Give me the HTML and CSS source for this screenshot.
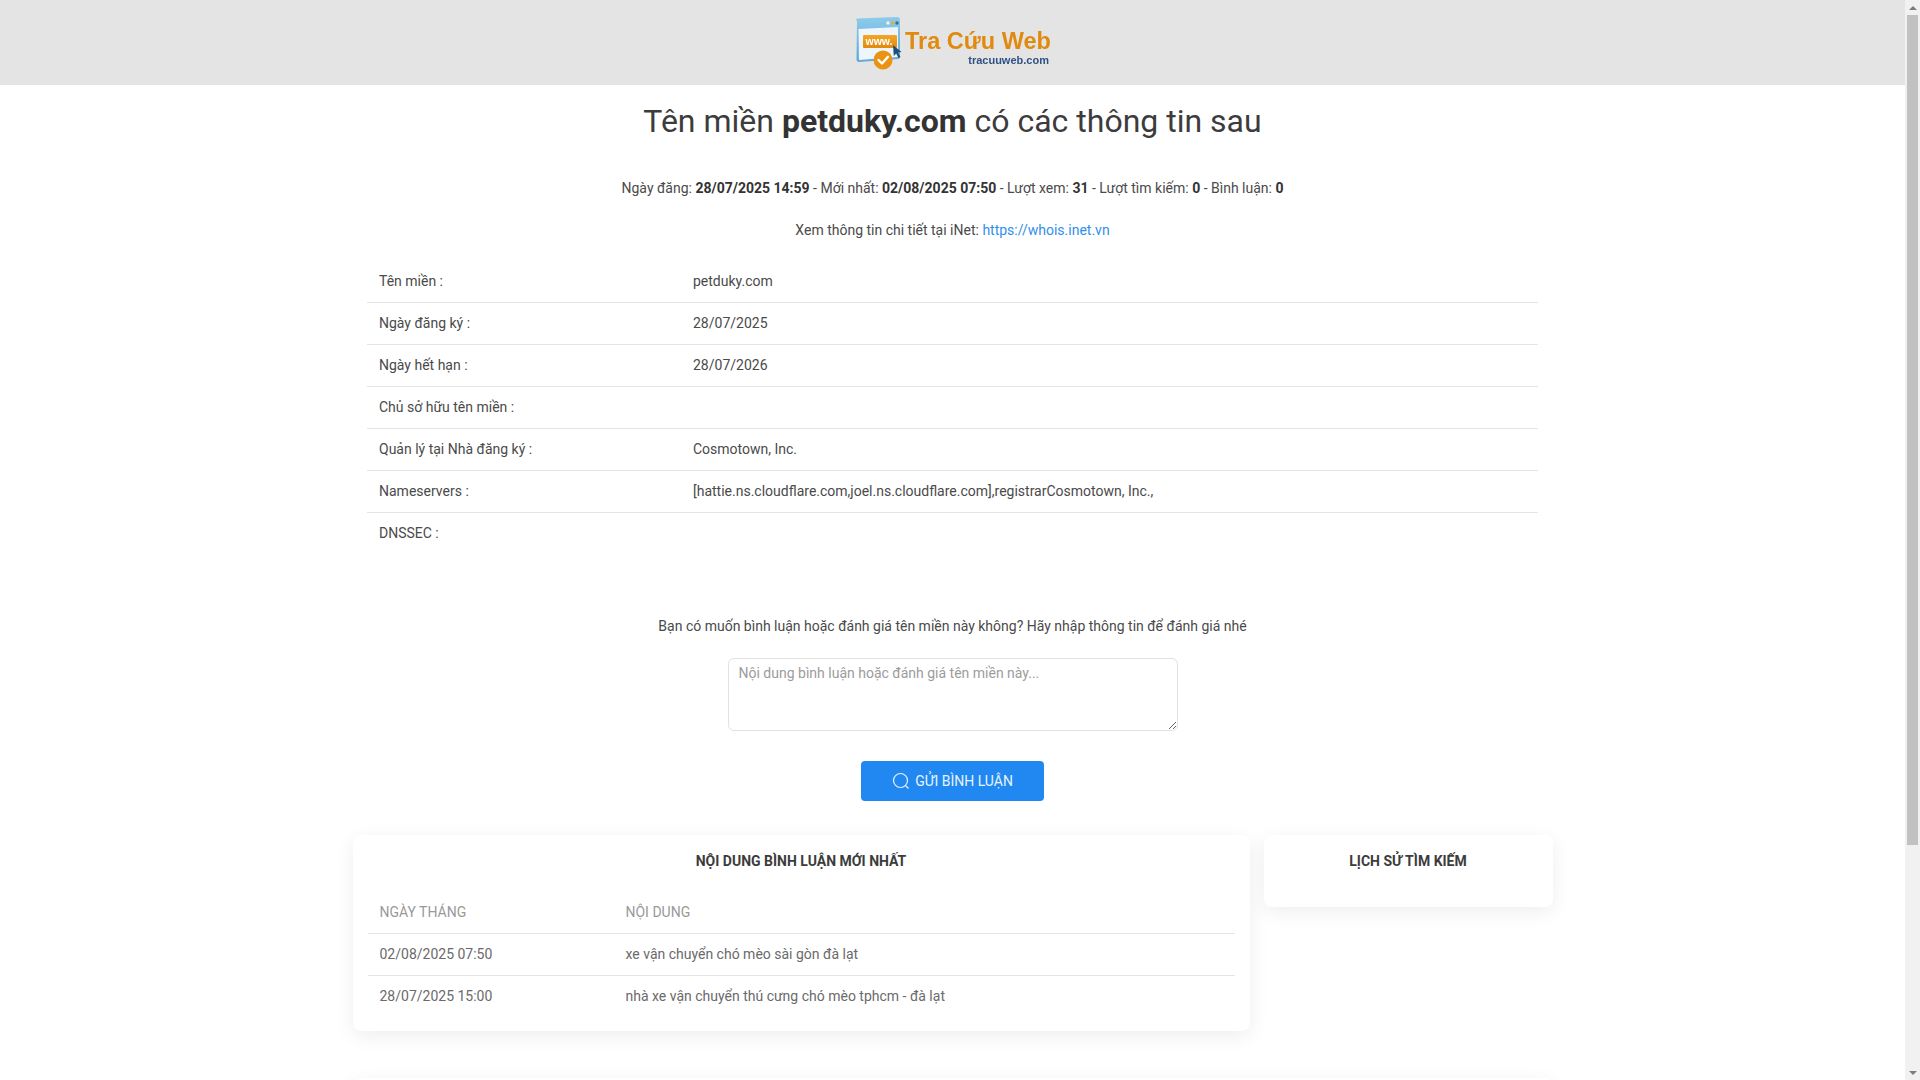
FILE: index.html
```html
<!DOCTYPE html>
<html lang="vi">
<head>
  <meta charset="UTF-8">
  <title>Tra Cứu Web - petduky.com</title>
  <link rel="stylesheet" href="styles.css">
</head>
<body>
  <header class="topbar">
    <a class="logo" href="#">
      <svg class="logo-icon" width="50" height="56" viewBox="0 0 50 56">
        <defs>
          <linearGradient id="frameGrad" x1="0" y1="0" x2="0" y2="1">
            <stop offset="0" stop-color="#8ccbea"/>
            <stop offset="1" stop-color="#5fa9dc"/>
          </linearGradient>
          <linearGradient id="barGrad" x1="0" y1="0" x2="0" y2="1">
            <stop offset="0" stop-color="#f5a623"/>
            <stop offset="1" stop-color="#e08a10"/>
          </linearGradient>
        </defs>
        <path d="M3 5 Q1 3 3.500 2.500 L43 1 Q46 1 46 4 L46 41 Q46 43 44 43 L5 46 Q2.500 46 2.500 43 Z" fill="url(#frameGrad)"/>
        <path d="M4.500 13 L44 11 L44 41 L5 44 Z" fill="#eef5fb"/>
        <circle cx="34" cy="7" r="1.700" fill="#f4f4f4"/>
        <circle cx="38.500" cy="7" r="1.700" fill="#f0a92a"/>
        <circle cx="43" cy="7" r="1.700" fill="#3c6e96"/>
        <rect x="9" y="19" width="34" height="13" rx="1" fill="url(#barGrad)"/>
        <text x="11.500" y="29" class="logo-www">www.</text>
        <path d="M39 29 L47.500 36 L44 36.500 L46.500 41 L44.500 42 L42.200 37.500 L39.800 40 Z" fill="#1f4e79"/>
        <circle cx="29" cy="44" r="9.500" fill="#ea9312"/>
        <path d="M24.500 44 L28 47.500 L34 40.800" fill="none" stroke="#fff" stroke-width="2.400" stroke-linecap="round" stroke-linejoin="round"/>
      </svg>
      <span class="logo-text">
        <span class="logo-name">Tra Cứu Web</span>
        <span class="logo-url">tracuuweb.com</span>
      </span>
    </a>
  </header>

  <main class="container">
    <h1 class="page-title">Tên miền <strong>petduky.com</strong> có các thông tin sau</h1>
    <p class="meta">Ngày đăng: <strong>28/07/2025 14:59</strong> - Mới nhất: <strong>02/08/2025 07:50</strong> - Lượt xem: <strong>31</strong> - Lượt tìm kiếm: <strong>0</strong> - Bình luận: <strong>0</strong></p>
    <p class="meta meta-link">Xem thông tin chi tiết tại iNet: <a href="#">https://whois.inet.vn</a></p>

    <table class="info-table">
      <tr><td class="info-label">Tên miền :</td><td>petduky.com</td></tr>
      <tr><td class="info-label">Ngày đăng ký :</td><td>28/07/2025</td></tr>
      <tr><td class="info-label">Ngày hết hạn :</td><td>28/07/2026</td></tr>
      <tr><td class="info-label">Chủ sở hữu tên miền :</td><td></td></tr>
      <tr><td class="info-label">Quản lý tại Nhà đăng ký :</td><td>Cosmotown, Inc.</td></tr>
      <tr><td class="info-label">Nameservers :</td><td>[hattie.ns.cloudflare.com,joel.ns.cloudflare.com],registrarCosmotown, Inc.,</td></tr>
      <tr><td class="info-label">DNSSEC :</td><td></td></tr>
    </table>

    <form class="comment-form">
      <p class="comment-hint">Bạn có muốn bình luận hoặc đánh giá tên miền này không? Hãy nhập thông tin để đánh giá nhé</p>
      <textarea class="comment-input" placeholder="Nội dung bình luận hoặc đánh giá tên miền này..."></textarea>
      <button class="comment-btn" type="button">
        <svg width="18" height="18" viewBox="0 0 18 18"><circle cx="8.500" cy="8.500" r="7" fill="none" stroke="#e8f3fe" stroke-width="1.200"/><path d="M13.500 13.500 L16.500 16.500" stroke="#e8f3fe" stroke-width="1.200"/></svg>
        GỬI BÌNH LUẬN
      </button>
    </form>

    <div class="card-row">
      <section class="card">
        <h2 class="card-title">NỘI DUNG BÌNH LUẬN MỚI NHẤT</h2>
        <table class="list-table">
          <tr><th class="col-date">NGÀY THÁNG</th><th>NỘI DUNG</th></tr>
          <tr><td>02/08/2025 07:50</td><td>xe vận chuyển chó mèo sài gòn đà lạt</td></tr>
          <tr><td>28/07/2025 15:00</td><td>nhà xe vận chuyển thú cưng chó mèo tphcm - đà lạt</td></tr>
        </table>
      </section>
      <section class="card card-side">
        <h2 class="card-title">LỊCH SỬ TÌM KIẾM</h2>
      </section>
    </div>

    <section class="card card-next"></section>
  </main>

  <div class="scrollbar" aria-hidden="true">
    <span class="scroll-arrow scroll-up"></span>
    <span class="scroll-thumb"></span>
    <span class="scroll-arrow scroll-down"></span>
  </div>
</body>
</html>
```

FILE: styles.css
```css
* {
  box-sizing: border-box;
}

body {
  margin: 0;
  padding-right: 15px;
  font-family: Roboto, "Noto Sans", sans-serif;
  font-size: 14px;
  line-height: 20px;
  color: #4a4a4a;
  background-color: #fff;
}

.topbar {
  height: 85px;
  padding-top: 16px;
  background-color: #e5e4e5;
}

.logo {
  display: flex;
  justify-content: center;
  align-items: flex-start;
  text-decoration: none;
  filter: blur(0.3px);
}

.logo-www {
  font-family: "Liberation Sans", sans-serif;
  font-size: 10.500px;
  font-weight: 700;
  fill: #fff;
}

.logo-text {
  display: flex;
  flex-direction: column;
  align-items: flex-end;
  margin-left: 1px;
  font-family: "Liberation Sans", sans-serif;
  font-weight: 700;
}

.logo-name {
  margin-top: 12px;
  font-size: 23.500px;
  line-height: 26px;
  color: #e08a10;
}

.logo-url {
  margin-right: 2px;
  font-size: 11px;
  line-height: 13px;
  color: #2f5283;
}

.container {
  width: 1200px;
  margin: 0 auto;
}

.page-title {
  margin: 0;
  padding-top: 14px;
  font-size: 32px;
  line-height: 44px;
  font-weight: 400;
  text-align: center;
  color: #3c3c3c;
}

.page-title strong,
.meta strong {
  font-weight: 700;
  color: #333;
}

.meta {
  margin: 0;
  padding-top: 35px;
  text-align: center;
}

.meta-link {
  padding-top: 22px;
}

.meta-link a {
  color: #2f8fee;
  text-decoration: none;
}

.info-table {
  width: 1171px;
  margin: 20px auto 0;
  border-collapse: collapse;
}

.info-table td {
  height: 42px;
  padding: 0 12px;
  border-bottom: 1px solid #e4e4e4;
}

.info-table tr:last-child td {
  border-bottom: none;
}

.info-label {
  width: 314px;
}

.comment-form {
  display: flex;
  flex-direction: column;
  align-items: center;
}

.comment-hint {
  margin: 0;
  padding-top: 62px;
}

.comment-input {
  width: 450px;
  height: 73px;
  margin-top: 22px;
  padding: 4px 10px;
  border: 1px solid #e2e2e2;
  border-radius: 6px;
  font-family: inherit;
  font-size: 14px;
  line-height: 20px;
  color: #4a4a4a;
}

.comment-input::placeholder {
  color: #9c9c9c;
}

.comment-btn {
  display: flex;
  justify-content: center;
  align-items: center;
  gap: 5px;
  width: 183px;
  height: 40px;
  margin-top: 30px;
  border: none;
  border-radius: 4px;
  background-color: #2088f0;
  font-family: inherit;
  font-size: 14px;
  color: #e8f3fe;
}

.card-row {
  display: grid;
  grid-template-columns: 897px 289px;
  justify-content: space-between;
  align-items: start;
  margin-top: 34px;
}

.card {
  padding: 12px 15px 14px;
  border-radius: 8px;
  background-color: #fff;
  box-shadow: 0 5px 20px rgba(0, 0, 0, 0.07);
}

.card-title {
  margin: 0;
  font-size: 14px;
  line-height: 28px;
  font-weight: 700;
  text-align: center;
  color: #3c3c3c;
}

.card-side {
  height: 72px;
}

.list-table {
  width: 100%;
  margin-top: 16px;
  border-collapse: collapse;
  color: #6a6a6a;
}

.list-table th {
  height: 42px;
  padding: 0 12px;
  font-weight: 400;
  text-align: left;
  color: #999;
}

.list-table td {
  height: 42px;
  padding: 0 12px;
  border-top: 1px solid #e4e4e4;
}

.col-date {
  width: 246px;
}

.card-next {
  height: 286px;
  margin-top: 47px;
}

/* page scrollbar, drawn because the capture has none */
.scrollbar {
  position: fixed;
  top: 0;
  right: 0;
  bottom: 0;
  display: flex;
  flex-direction: column;
  width: 15px;
  background-color: #f1f1f1;
}

.scroll-arrow {
  flex: none;
  width: 0;
  height: 0;
  margin: 6px auto 5px;
  border-left: 4px solid transparent;
  border-right: 4px solid transparent;
}

.scroll-up {
  border-bottom: 4px solid #7c7c7c;
}

.scroll-down {
  margin-top: auto;
  border-top: 4px solid #7c7c7c;
}

.scroll-thumb {
  flex: none;
  width: 100%;
  height: 830px;
  background-color: #c1c1c1;
  border-left: 2px solid #f1f1f1;
  border-right: 2px solid #f1f1f1;
}
```
